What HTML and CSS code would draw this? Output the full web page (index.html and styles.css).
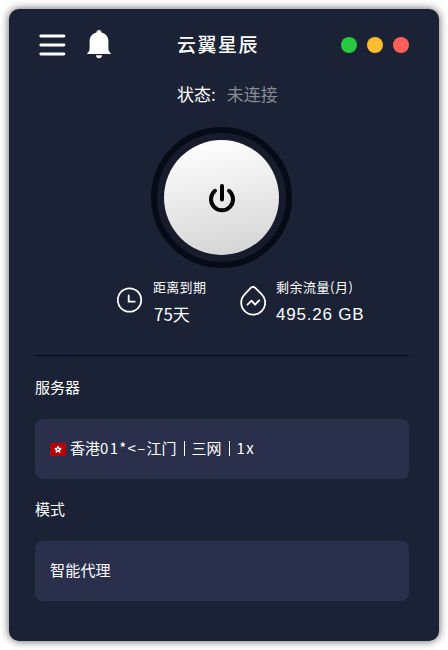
FILE: index.html
```html
<!DOCTYPE html>
<html lang="zh-CN">
<head>
<meta charset="utf-8">
<title>云翼星辰</title>
<link rel="stylesheet" href="styles.css">
</head>
<body>
<main class="window">
  <header class="header">
    <div class="tools">
      <svg width="28" height="24" viewBox="0 0 28 24" fill="none" stroke="#fff" stroke-width="2.9" stroke-linecap="round"><path d="M1.800 3h23.100M1.800 12h23.100M1.800 21h23.100"/></svg>
      <svg class="bell" width="24" height="29" viewBox="0 0 24 29" fill="#fff"><path d="M12 0c1.500 0 2.500 1.100 2.500 2.600C18.800 3.600 21.400 7.100 21.400 11.200V17.500c0 3 .3 4 2.400 5.800V24H.2v-.7C2.300 21.500 2.600 20.500 2.600 17.500V11.200C2.600 7.100 5.200 3.600 9.500 2.600 9.500 1.100 10.500 0 12 0zM9 25.200h6c0 1.800-1.200 3-3 3s-3-1.200-3-3z"/></svg>
    </div>
    <h1 class="title">云翼星辰</h1>
    <div class="dots"><i class="dot green"></i><i class="dot yellow"></i><i class="dot red"></i></div>
  </header>
  <p class="status"><span>状态:</span><span class="state">未连接</span></p>
  <div class="ring">
    <button class="power" aria-label="连接">
      <svg width="28" height="30" viewBox="0 0 28 30" fill="none" stroke="#000" stroke-width="4" stroke-linecap="round"><path d="M14 3v13.500M7 7.800a11 11 0 1 0 14 0"/></svg>
    </button>
  </div>
  <section class="stats">
    <div class="stat expiry">
      <svg width="26" height="26" viewBox="0 0 26 26" fill="none" stroke="#fff" stroke-width="1.8" stroke-linecap="round"><circle cx="12.500" cy="13" r="11.700"/><path d="M11.700 8.500v6.200h6"/></svg>
      <div><div class="label">距离到期</div><div class="value days">75天</div></div>
    </div>
    <div class="stat traffic">
      <svg width="26" height="30" viewBox="0 0 26 30" fill="none" stroke="#fff" stroke-width="1.8" stroke-linecap="round" stroke-linejoin="round"><path d="M11 1.700Q13 .1 15 1.700L21.500 8.200C24 10.700 25.200 13.400 25.200 16.600C25.200 23.400 19.800 28.600 13.200 28.600S1.200 23.400 1.200 16.600C1.200 13.400 2.400 10.700 4.900 8.200z"/><path d="M7.500 18.700l4-4 3.500 4 4.200-4.200"/></svg>
      <div><div class="label month">剩余流量(月)</div><div class="value gb">495.26 GB</div></div>
    </div>
  </section>
  <section class="settings">
    <h2 class="heading">服务器</h2>
    <div class="field">
      <svg class="flag" width="16" height="13" viewBox="0 0 16 13"><rect width="16" height="13" rx="1" fill="#b80008"/><g fill="#fff"><ellipse cx="8" cy="4.500" rx="1.100" ry="1.600"/><ellipse cx="8" cy="4.500" rx="1.100" ry="1.600" transform="rotate(72 8 6.500)"/><ellipse cx="8" cy="4.500" rx="1.100" ry="1.600" transform="rotate(144 8 6.500)"/><ellipse cx="8" cy="4.500" rx="1.100" ry="1.600" transform="rotate(216 8 6.500)"/><ellipse cx="8" cy="4.500" rx="1.100" ry="1.600" transform="rotate(288 8 6.500)"/></g><circle cx="8" cy="6.500" r=".9" fill="#c9444a"/></svg>
      <span class="server">香港<span class="code">01*&lt;–</span>江门<i class="bar"></i>三网<i class="bar"></i><span class="rate">1x</span></span>
    </div>
    <h2 class="heading mode-heading">模式</h2>
    <div class="field"><span class="mode">智能代理</span></div>
  </section>
</main>
</body>
</html>
```

FILE: styles.css
```css
* { box-sizing: border-box; }
body {
  margin: 0;
  padding: 9px;
  height: 650px;
  overflow: hidden;
  background: #fff;
  color: #fff;
  font-family: "Noto Sans CJK SC", sans-serif;
}
.window {
  width: 430px;
  height: 632px;
  padding: 0 30px 0 26px;
  border-radius: 10px;
  background: #1b2235;
  box-shadow: 0 0 9px rgba(0, 0, 0, .65);
}
svg { display: block; flex: none; }
h1, h2, p { margin: 0; font-weight: 400; }
.header {
  display: grid;
  grid-template-columns: 142px 1fr auto;
  align-items: center;
  height: 72px;
}
.tools { display: flex; align-items: center; gap: 20px; padding-left: 4px; }
.bell { margin-top: -2px; }
.title { padding-bottom: 2px; font-size: 19px; line-height: 28px; font-weight: 500; letter-spacing: 1.500px; }
.dots { display: flex; gap: 10px; }
.dot { width: 16px; height: 16px; border-radius: 50%; }
.green { background: #2ac840; }
.yellow { background: #ffbc2e; }
.red { background: #ff5f57; }
.status {
  display: flex;
  gap: 11px;
  height: 28px;
  padding-left: 142px;
  font-size: 17px;
  line-height: 26px;
}
.state { color: #898b92; }
.ring {
  display: grid;
  place-items: center;
  width: 141px;
  height: 141px;
  margin: 18px 0 0 116px;
  border: 6px solid #050b17;
  border-radius: 50%;
  background: #171b2b;
}
.power {
  display: grid;
  place-items: center;
  width: 115px;
  height: 115px;
  padding: 0;
  border: 0;
  border-radius: 50%;
  background: linear-gradient(170deg, #fff 5%, #d2d2d2 100%);
}
.stats {
  display: flex;
  height: 88px;
  border-bottom: 1px solid #060d1c;
  padding: 9px 0 0 82px;
}
.stat { display: flex; align-items: flex-start; gap: 10px; }
.expiry { width: 123px; }
.expiry svg { margin-top: 10px; }
.traffic svg { margin-top: 9px; }
.label { font-size: 13px; line-height: 20px; letter-spacing: .3px; white-space: nowrap; }
.month { letter-spacing: .5px; }
.value { margin-top: 5px; font-size: 17px; line-height: 24px; white-space: nowrap; }
.days { padding-left: 1px; }
.gb { font-family: "Liberation Sans", sans-serif; line-height: 26px; letter-spacing: .8px; }
.heading { font-size: 15px; line-height: 22px; margin-top: 20px; }
.mode-heading { margin-top: 19px; }
.field {
  display: flex;
  align-items: center;
  height: 60px;
  margin-top: 21px;
  padding: 0 15px;
  border-radius: 8px;
  background: #2a2f4c;
  font-size: 15px;
}
.flag { margin-right: 4px; }
.server { display: flex; align-items: center; padding-bottom: 3px; }
.code { letter-spacing: 1.300px; }
.bar { width: 1px; height: 15px; margin: 2px 7px 0; background: #fff; }
.rate { letter-spacing: 1.300px; }
.mode { padding-bottom: 3px; letter-spacing: .2px; }
```
